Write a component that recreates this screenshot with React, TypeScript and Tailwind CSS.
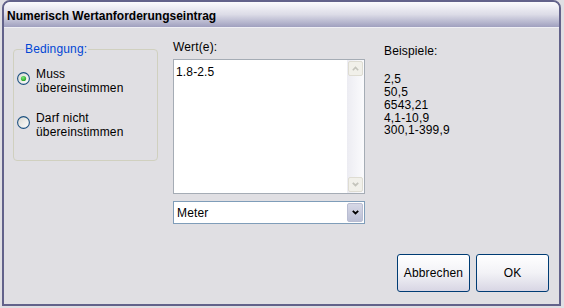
import React from "react";

function Radio({ checked }: { checked?: boolean }) {
  return (
    <svg width="13" height="13" viewBox="0 0 13 13" className="shrink-0">
      <defs>
        <linearGradient id={checked ? "rg1" : "rg2"} x1="0" y1="0" x2="1" y2="1">
          <stop offset="0" stopColor="#d8d8d2" />
          <stop offset="1" stopColor="#ffffff" />
        </linearGradient>
        <radialGradient id={checked ? "gd1" : "gd2"} cx="0.4" cy="0.35" r="0.7">
          <stop offset="0" stopColor="#7be87a" />
          <stop offset="1" stopColor="#1e9e1e" />
        </radialGradient>
      </defs>
      <circle cx="6.5" cy="6.5" r="5.9" fill={`url(#${checked ? "rg1" : "rg2"})`} stroke="#1c5180" strokeWidth="1.1" />
      {checked && <circle cx="6.5" cy="6.5" r="2.6" fill={`url(#${checked ? "gd1" : "gd2"})`} />}
    </svg>
  );
}

function Chevron({ dir, color, w = 7 }: { dir: "up" | "down"; color: string; w?: number }) {
  return (
    <svg width={w} height="5" viewBox="0 0 7 5">
      {dir === "up" ? (
        <path d="M0.8 4.2 L3.5 1.5 L6.2 4.2" fill="none" stroke={color} strokeWidth="1.6" />
      ) : (
        <path d="M0.8 0.8 L3.5 3.5 L6.2 0.8" fill="none" stroke={color} strokeWidth="1.8" />
      )}
    </svg>
  );
}

export default function App() {
  return (
    <div className="w-[564px] h-[308px] bg-[#e0dfe3] font-['Liberation_Sans',Arial,sans-serif] text-[12px] text-black tracking-[0.15px]">
      <div className="ml-[2px] w-[559px] h-[306px] flex flex-col border-2 border-[#62628a] rounded-t-[8px] overflow-hidden bg-[#e0dfe3]">
        <div className="h-[26px] shrink-0 bg-gradient-to-b from-[#fbfbfd] via-[#dcdce7] to-[#a0a0bf] border-b border-[#efeff4] pl-[3px] pt-[7px] leading-[14px] font-bold text-[12px] tracking-normal">
          Numerisch Wertanforderungseintrag
        </div>
        <div className="flex-1 flex flex-col">
          <div className="flex">
            <fieldset className="ml-[9px] mt-[14px] w-[145px] h-[119px] border border-[#d0d0bf] rounded-[4px] m-0 pt-[11px] pl-[3px] pr-0 pb-0">
              <legend className="ml-[7px] px-[1px] leading-[14px] text-[#0046d5]">Bedingung:</legend>
              <div className="flex gap-[6px]">
                <div className="mt-[5px]">
                  <Radio checked />
                </div>
                <div className="leading-[14px]">
                  Muss
                  <br />
                  übereinstimmen
                </div>
              </div>
              <div className="flex gap-[6px] mt-[16px]">
                <div className="mt-[5px]">
                  <Radio />
                </div>
                <div className="leading-[14px]">
                  Darf nicht
                  <br />
                  übereinstimmen
                </div>
              </div>
            </fieldset>

            <div className="ml-[15px] mt-[12px] w-[192px] flex flex-col">
              <div className="leading-[14px]">Wert(e):</div>
              <div className="mt-[5px] h-[135px] border border-[#a5acb5] bg-white flex">
                <div className="flex-1 pl-[2px] pt-[5px] leading-[14px]">1.8-2.5</div>
                <div className="w-[17px] h-full bg-gradient-to-r from-[#ececf2] to-[#fbfbfd] flex flex-col justify-between p-[1px] pr-[1px]">
                  <div className="w-[15px] h-[15px] rounded-[2px] border border-[#dedcd2] bg-[#f1f0ea] flex items-center justify-center">
                    <Chevron dir="up" color="#c4c4bc" />
                  </div>
                  <div className="w-[15px] h-[15px] rounded-[2px] border border-[#dedcd2] bg-[#f1f0ea] flex items-center justify-center">
                    <Chevron dir="down" color="#c4c4bc" />
                  </div>
                </div>
              </div>
              <div className="mt-[7px] h-[23px] border border-[#7f9db9] bg-white flex items-center">
                <div className="flex-1 pl-[3px] leading-[14px]">Meter</div>
                <div className="w-[16px] h-[19px] mr-[1px] rounded-[2px] border border-[#b9bdd2] bg-gradient-to-b from-[#d6d8e6] to-[#bcc0d6] flex items-center justify-center">
                  <Chevron dir="down" color="#000000" />
                </div>
              </div>
            </div>

            <div className="ml-[19px] mt-[17px] leading-[12.75px]">
              <div>Beispiele:</div>
              <div className="mt-[15.6px]">
                <div>2,5</div>
                <div>50,5</div>
                <div>6543,21</div>
                <div>4,1-10,9</div>
                <div>300,1-399,9</div>
              </div>
            </div>
          </div>

          <div className="mt-auto flex justify-end gap-[6px] pr-[10px] pb-[12px]">
            <button className="w-[73px] h-[38px] rounded-[3px] border border-[#003c74] bg-gradient-to-b from-[#ffffff] via-[#f2f2f6] to-[#d8d6e4] flex items-center justify-center">
              Abbrechen
            </button>
            <button className="w-[73px] h-[38px] rounded-[3px] border border-[#003c74] bg-gradient-to-b from-[#ffffff] via-[#f2f2f6] to-[#d8d6e4] flex items-center justify-center">
              OK
            </button>
          </div>
        </div>
      </div>
    </div>
  );
}
